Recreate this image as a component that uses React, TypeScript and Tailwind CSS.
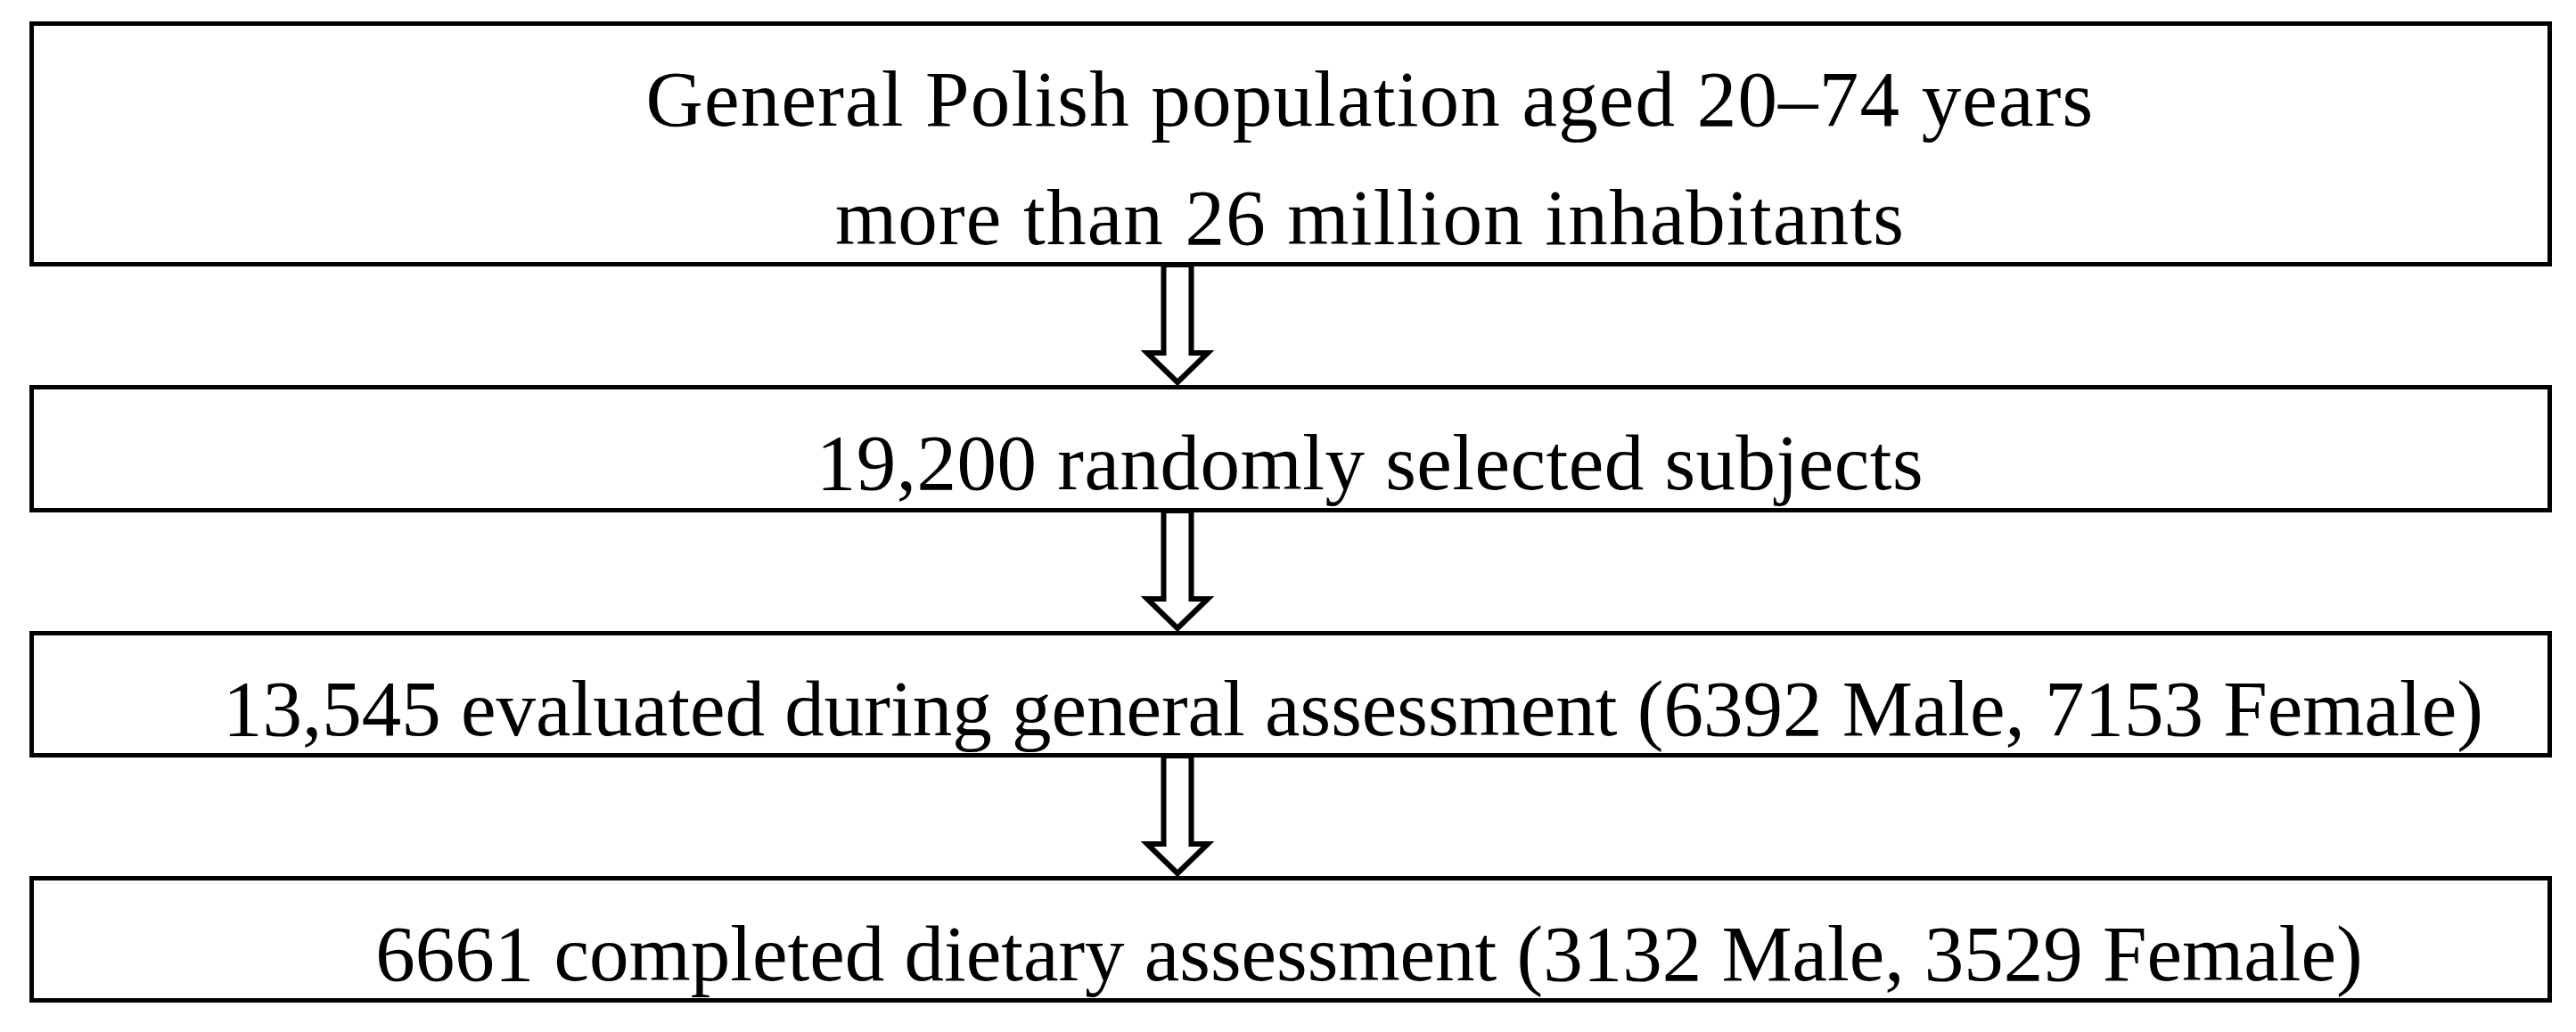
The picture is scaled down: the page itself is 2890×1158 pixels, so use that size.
import React from "react";

type Step = {
  lines: string[];
  height: string;
  pad: string;
  tracking: string;
};

const steps: Step[] = [
  {
    lines: ["General Polish population aged 20–74 years", "more than 26 million inhabitants"],
    height: "h-[275px]",
    pad: "pl-[178px]",
    tracking: "tracking-[1.2px]",
  },
  {
    lines: ["19,200 randomly selected subjects"],
    height: "h-[143px]",
    pad: "pl-[178px]",
    tracking: "tracking-[0.5px]",
  },
  {
    lines: ["13,545 evaluated during general assessment (6392 Male, 7153 Female)"],
    height: "h-[142px]",
    pad: "pl-[140px]",
    tracking: "tracking-normal",
  },
  {
    lines: ["6661 completed dietary assessment (3132 Male, 3529 Female)"],
    height: "h-[142px]",
    pad: "pl-[176px]",
    tracking: "tracking-normal",
  },
];

function DownArrow() {
  return (
    <div className="flex h-[133px]">
      <svg width="80" height="133" viewBox="0 0 80 133" overflow="visible" className="ml-[1248px] overflow-visible">
        <path
          d="M24.5 -2 H55.5 V97 H74 L40 130 L6 97 H24.5 Z"
          fill="#ffffff"
          stroke="#000000"
          strokeWidth="6"
          strokeMiterlimit="10"
        />
      </svg>
    </div>
  );
}

export default function App() {
  return (
    <div className="min-h-screen bg-white pl-[33px] pt-[24px] text-black" style={{ fontFamily: '"Liberation Serif", "Times New Roman", serif' }}>
      <div className="flex w-[2830px] flex-col">
        {steps.map((step, i) => (
          <React.Fragment key={i}>
            {i > 0 && <DownArrow />}
            <div className={`relative z-10 border-[5px] border-black bg-transparent ${step.height} ${step.pad}`}>
              <div className={`pt-[16px] text-center text-[89px] leading-[133px] whitespace-nowrap ${step.tracking}`}>
                {step.lines.map((line) => (
                  <div key={line}>{line}</div>
                ))}
              </div>
            </div>
          </React.Fragment>
        ))}
      </div>
    </div>
  );
}
